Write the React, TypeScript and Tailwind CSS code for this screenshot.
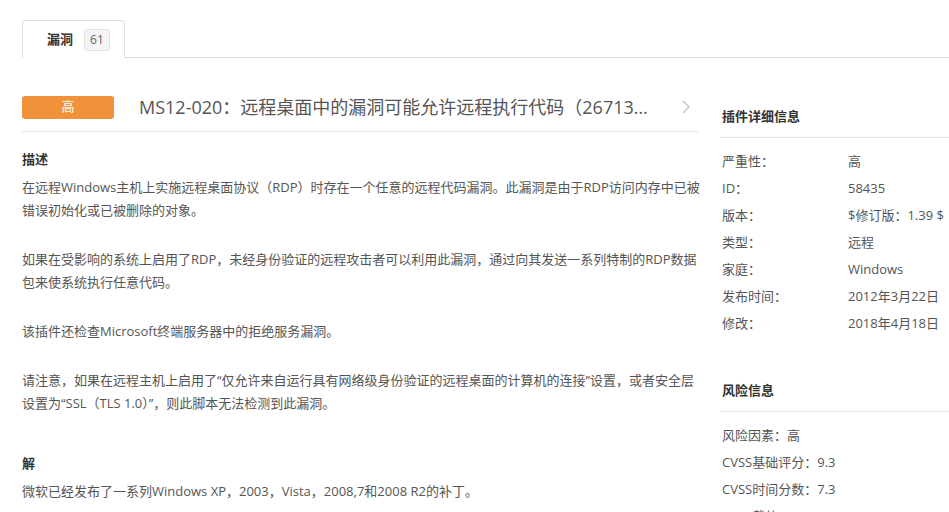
import React from 'react';

const font = { fontFamily: '"Open Sans", "Noto Sans CJK SC", sans-serif' };

const details: { label: string; value: string }[] = [
    { label: '严重性：', value: '高' },
    { label: 'ID：', value: '58435' },
    { label: '版本：', value: '$修订版：1.39 $' },
    { label: '类型：', value: '远程' },
    { label: '家庭：', value: 'Windows' },
    { label: '发布时间：', value: '2012年3月22日' },
    { label: '修改：', value: '2018年4月18日' },
];

const risks = ['风险因素：高', 'CVSS基础评分：9.3', 'CVSS时间分数：7.3', 'CVSS载体：CVSS2#AV:N'];

const paragraphs = [
    '在远程Windows主机上实施远程桌面协议（RDP）时存在一个任意的远程代码漏洞。此漏洞是由于RDP访问内存中已被错误初始化或已被删除的对象。',
    '如果在受影响的系统上启用了RDP，未经身份验证的远程攻击者可以利用此漏洞，通过向其发送一系列特制的RDP数据包来使系统执行任意代码。',
    '该插件还检查Microsoft终端服务器中的拒绝服务漏洞。',
    '请注意，如果在远程主机上启用了“仅允许来自运行具有网络级身份验证的远程桌面的计算机的连接”设置，或者安全层设置为“SSL（TLS 1.0）”，则此脚本无法检测到此漏洞。',
];

export default function App() {
    return (
        <div className="w-[949px] h-[512px] overflow-hidden bg-white text-[13px] text-[#555]" style={font}>
            {/* Tabs */}
            <div className="flex pt-5 pl-[22px]">
                <div className="flex items-center h-[38px] w-[103px] border border-b-0 border-[#dedede] rounded-t-[4px] pl-[24px] gap-[11px]">
                    <span className="font-bold text-[#333]">漏洞</span>
                    <span className="h-[22px] px-[5px] flex items-center bg-[#f4f4f4] border border-[#e3e3e3] rounded-[3px] text-[12px] text-[#666]">61</span>
                </div>
                <div className="flex-1 border-b border-[#dedede]" />
            </div>

            <div className="flex pl-[22px] gap-[20px]">
                {/* Main column */}
                <div className="w-[680px] shrink-0">
                    <div className="mt-[37px] pb-[12px] border-b border-[#e3e3e3] flex items-center mr-[4px]">
                        <div className="w-[92px] h-[23px] rounded-[3px] bg-[#f0923a] text-white flex items-center justify-center">高</div>
                        <div className="ml-[25px] w-[510px] truncate text-[18px] leading-[24px] text-[#555]">
                            MS12-020：远程桌面中的漏洞可能允许远程执行代码（2671387）
                        </div>
                        <svg className="ml-[32px]" width="10" height="16" viewBox="0 0 10 16">
                            <polyline points="2,2 8,8 2,14" fill="none" stroke="#c4c4c4" strokeWidth="1.4" />
                        </svg>
                    </div>

                    <div className="mt-[16px] leading-[23px] mb-[5px] font-bold text-[#333]">描述</div>
                    {paragraphs.map((p, i) => (
                        <p key={i} className="leading-[23px] mb-[26px]">{p}</p>
                    ))}

                    <div className="mt-[37px] leading-[23px] mb-[5px] font-bold text-[#333]">解</div>
                    <p className="leading-[23px]">微软已经发布了一系列Windows XP，2003，Vista，2008,7和2008 R2的补丁。</p>
                </div>

                {/* Sidebar */}
                <div className="flex-1 min-w-[260px]">
                    <div className="pt-[47px] pb-[9px] leading-[23px] font-bold text-[#333] border-b border-[#e3e3e3] -ml-[2px] pl-[2px]">插件详细信息</div>
                    <div className="mt-[10px]">
                        {details.map(d => (
                            <div key={d.label} className="flex leading-[27px]">
                                <span className="w-[126px] shrink-0">{d.label}</span>
                                <span>{d.value}</span>
                            </div>
                        ))}
                    </div>

                    <div className="mt-[42px] pb-[9px] leading-[23px] font-bold text-[#333] border-b border-[#e3e3e3] -ml-[2px] pl-[2px]">风险信息</div>
                    <div className="mt-[10px]">
                        {risks.map(r => (
                            <div key={r} className="leading-[27px] whitespace-nowrap">{r}</div>
                        ))}
                    </div>
                </div>
            </div>
        </div>
    );
}
